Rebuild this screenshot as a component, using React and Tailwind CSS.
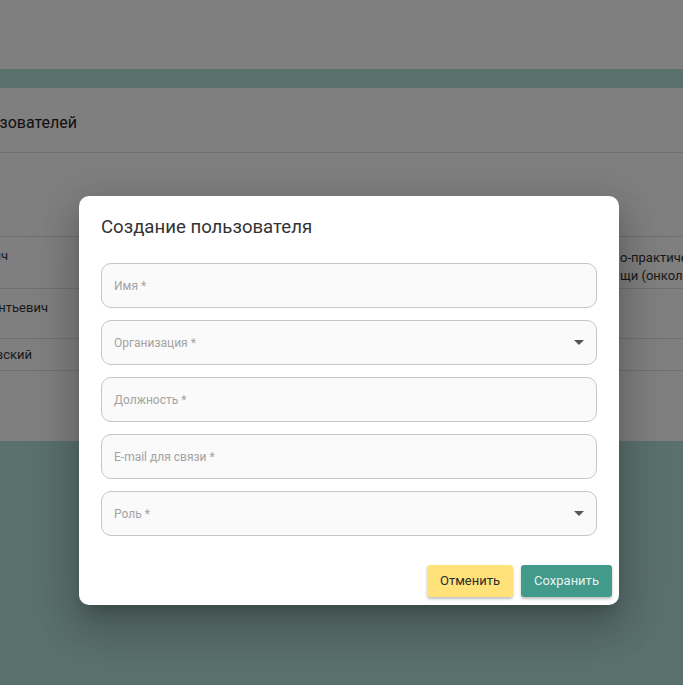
import React from 'react';

const FIELDS = [
  { label: 'Имя *', select: false },
  { label: 'Организация *', select: true },
  { label: 'Должность *', select: false },
  { label: 'E-mail для связи *', select: false },
  { label: 'Роль *', select: true },
];

const ROWS = [
  { left: 'Сергей Петрович', right: ['о-практический центр', 'щи (онкологии)'], h: 'h-[52px]' },
  { left: 'Андрей Валентьевич', right: [], h: 'h-[50px]' },
  { left: 'Ковалевский', right: [], h: 'h-[32px]' },
];

function Caret() {
  return (
    <svg width="10" height="5" viewBox="0 0 10 5" className="shrink-0">
      <path d="M0 0 L10 0 L5 5 Z" fill="#555" />
    </svg>
  );
}

const App = () => {
  return (
    <div className="relative w-[683px] h-[685px] overflow-hidden bg-[#b4e0da]" style={{ fontFamily: 'Roboto, "Noto Sans", sans-serif' }}>
      {/* page behind the modal */}
      <div className="h-[69px] bg-white" />
      <div className="pt-[19px]">
        <div className="bg-white h-[353px] text-[#222]">
          <div className="flex items-center h-[65px] pt-[6px] border-b border-[#e0e0e0]">
            <div className="w-[80px] flex justify-end overflow-hidden whitespace-nowrap text-[16px] pr-[3px]">Список пользователей</div>
          </div>
          <div className="h-[84px] border-b border-[#e0e0e0]" />
          {ROWS.map((r, i) => (
            <div key={i} className={`flex ${r.h} border-b border-[#e0e0e0] text-[13px] text-[#333]`}>
              <div className={`w-[60px] flex justify-end overflow-hidden whitespace-nowrap ${i === 2 ? 'items-center' : 'pt-[9px]'}`}>
                <span className={i === 0 ? 'pr-[52px]' : i === 1 ? 'pr-[12px]' : 'pr-[28px]'}>{r.left}</span>
              </div>
              <div className="flex-1" />
              <div className="w-[63px] overflow-hidden whitespace-nowrap pt-[12px] leading-[18px]">
                {r.right.map((t) => (
                  <div key={t}>{t}</div>
                ))}
              </div>
            </div>
          ))}
        </div>
      </div>

      {/* overlay */}
      <div className="absolute inset-0 bg-black/50" />

      {/* dialog */}
      <div className="absolute left-[79px] top-[196px] w-[540px] h-[409px] bg-white rounded-[10px] shadow-[0_11px_15px_-7px_rgba(0,0,0,0.2),0_24px_38px_3px_rgba(0,0,0,0.14),0_9px_46px_8px_rgba(0,0,0,0.12)]">
        <div className="pl-[22px] pr-[7px] pt-[19px]">
          <h2 className="text-[18.6px] leading-[24px] text-[#333] font-normal">Создание пользователя</h2>
          <div className="mt-[24px] w-[496px] flex flex-col gap-[12px]">
            {FIELDS.map((f) => (
              <div key={f.label} className="h-[45px] rounded-[10px] border border-[#c6c6c6] bg-[#fafafa] flex items-center justify-between pl-[12px] pr-[12px]">
                <span className="text-[12px] text-[#a3a3a3]">{f.label}</span>
                {f.select && <Caret />}
              </div>
            ))}
          </div>
          <div className="mt-[29px] flex justify-end gap-[8px]">
            <button className="h-[32px] w-[86px] rounded-[3px] bg-[#ffe27a] text-[13px] text-[#2b2b2b] shadow-[0_2px_3px_rgba(0,0,0,0.25)]">Отменить</button>
            <button className="h-[32px] w-[91px] rounded-[3px] bg-[#429a8a] text-[13px] text-[#e6f2ef] shadow-[0_2px_3px_rgba(0,0,0,0.25)]">Сохранить</button>
          </div>
        </div>
      </div>
    </div>
  );
};

export default App;
